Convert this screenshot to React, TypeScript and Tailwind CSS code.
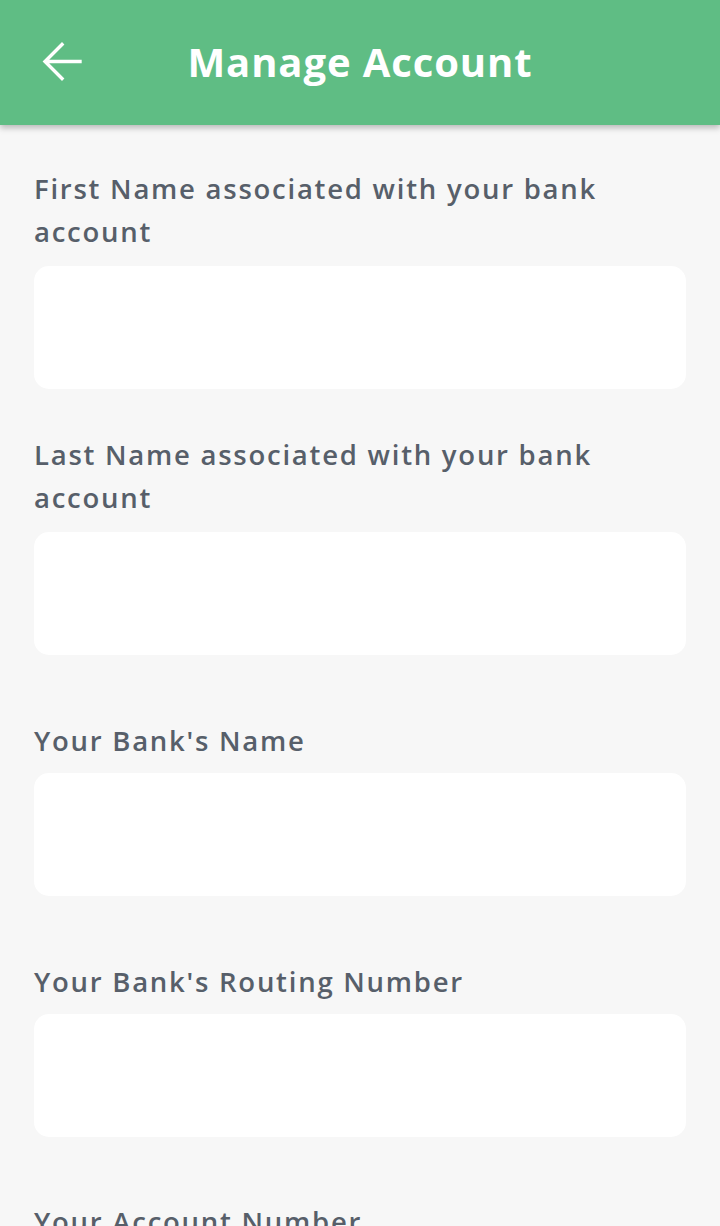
import React from "react";

const font = { fontFamily: '"Open Sans", "Liberation Sans", sans-serif' };

function Field({
  lines,
  mt,
  gap,
}: {
  lines: string[];
  mt: string;
  gap: string;
}) {
  return (
    <div className={mt}>
      <div className="text-[27.5px] leading-[43px] font-semibold text-[#575f6a] tracking-[1.75px]">
        {lines.map((l, i) => (
          <div key={i} className="whitespace-nowrap">
            {l}
          </div>
        ))}
      </div>
      <div className={`${gap} h-[123px] rounded-[15px] bg-white`} />
    </div>
  );
}

export default function App() {
  return (
    <div className="bg-[#f7f7f7] overflow-hidden h-[1226px]" style={font}>
      <header className="relative z-10 h-[125px] bg-[#5fbd84] shadow-[0_3px_6px_rgba(0,0,0,0.25)] grid grid-cols-[1fr_auto_1fr] items-center">
        <div className="pl-[42px] flex items-center">
          <svg width="40" height="40" viewBox="0 0 40 40" fill="none" className="mt-[-2px]">
            <path
              d="M38 19.5H4M20 2.5L3 19.5L20 36.5"
              stroke="white"
              strokeWidth="3.4"
              strokeLinecap="square"
              strokeLinejoin="miter"
            />
          </svg>
        </div>
        <h1 className="text-white font-bold text-[40px] leading-[48px] tracking-[0.9px] mb-[1px]">
          Manage Account
        </h1>
        <div />
      </header>
      <main className="px-[34px]">
        <Field mt="mt-[42px]" gap="mt-[13px]" lines={["First Name associated with your bank", "account"]} />
        <Field mt="mt-[44px]" gap="mt-[13px]" lines={["Last Name associated with your bank", "account"]} />
        <Field mt="mt-[64px]" gap="mt-[11px]" lines={["Your Bank's Name"]} />
        <Field mt="mt-[64px]" gap="mt-[11px]" lines={["Your Bank's Routing Number"]} />
        <Field mt="mt-[63px]" gap="mt-[11px]" lines={["Your Account Number"]} />
      </main>
    </div>
  );
}
